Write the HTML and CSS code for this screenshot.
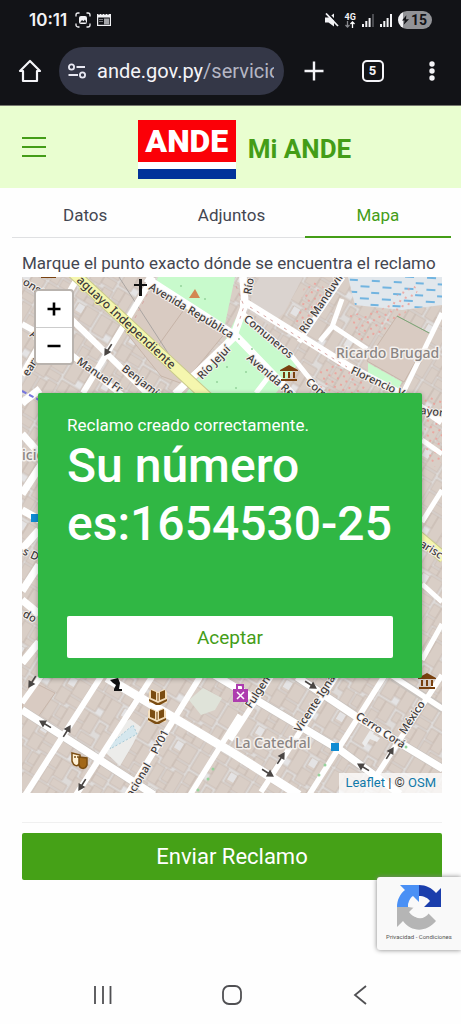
FILE: index.html
```html
<!DOCTYPE html>
<html lang="es">
<head>
  <meta charset="UTF-8" />
  <meta name="viewport" content="width=device-width, initial-scale=1.0" />
  <title>Mi ANDE</title>
  <link rel="stylesheet" href="styles.css">
</head>
<body>
  <!-- Status bar -->
  <div class="status-bar">
    <div class="status-left">
      <span class="clock">10:11</span>
      <svg width="16" height="16" viewBox="0 0 16 16" fill="none" stroke="#f2f2f5" stroke-width="1.3">
        <path d="M1 4.500V3a2 2 0 0 1 2-2h1.500M11.500 1H13a2 2 0 0 1 2 2v1.500M15 11.500V13a2 2 0 0 1-2 2h-1.500M4.500 15H3a2 2 0 0 1-2-2v-1.500"/>
        <rect x="4" y="4" width="8" height="8" rx="2" fill="#f2f2f5" stroke="none"/>
        <path d="M5 10.500l2-2.500 1.500 1.300L10 7.500l1.500 3z" fill="#121317" stroke="none"/>
      </svg>
      <svg width="14" height="14" viewBox="0 0 14 14">
        <path d="M0 1h14v12H0z" fill="#f2f2f5"/>
        <path d="M1.200 4.500h11.600v7.300H1.200z" fill="#121317"/>
        <path d="M2 6h4v1H2zM2 8h4v1H2z" fill="#77787d"/>
        <path d="M7 5.500h5v6H7z" fill="#a5a6aa"/>
        <path d="M2 0v2M5 0v2M8 0v2M11 0v2" stroke="#121317"/>
      </svg>
    </div>
    <div class="status-right">
      <svg width="14" height="14" viewBox="0 0 14 14">
        <path d="M0 4.500h3.500L9 .5v13l-5.500-4H0z" fill="#f2f2f5"/>
        <path d="M2.500 0l12 12" stroke="#121317" stroke-width="2"/>
        <path d="M1 .5l12 12.500" stroke="#f2f2f5" stroke-width="1.800"/>
      </svg>
      <span class="network">4G
        <svg width="10" height="7" viewBox="0 0 10 7" fill="none" stroke-width="1.300">
          <path d="M2.500 0v6M.500 4l2 2 2-2" stroke="#88898e"/>
          <path d="M7.500 7V1M5.500 3l2-2 2 2" stroke="#fff"/>
        </svg>
      </span>
      <svg width="12" height="13" viewBox="0 0 12 13" fill="#f2f2f5"><path d="M0 10h2v3H0zM3.300 7h2v6h-2zM6.600 4h2v9h-2z"/><path d="M10 0h2v13h-2z" fill="#4a4b50"/></svg>
      <svg width="12" height="13" viewBox="0 0 12 13" fill="#f2f2f5"><path d="M0 10h2v3H0zM3.300 7h2v6h-2zM6.600 4h2v9h-2zM10 0h2v13h-2z"/></svg>
      <span class="battery">
        <svg width="7" height="10" viewBox="0 0 8 11"><path d="M5 0L0 6h3L2 11l6-6.500H4.500z" fill="#121317"/></svg>15
      </span>
    </div>
  </div>

  <!-- Browser toolbar -->
  <div class="toolbar">
    <button class="tool" aria-label="Inicio">
      <svg width="24" height="24" viewBox="0 0 24 24" fill="none" stroke="#f4f4f8" stroke-width="2.200" stroke-linejoin="round"><path d="M2 12L12 2l10 10h-3v10H5V12z"/></svg>
    </button>
    <button class="address">
      <svg width="20" height="16" viewBox="0 0 20 16" fill="none" stroke="#e8e8f2" stroke-width="1.800"><circle cx="4.500" cy="4" r="2.600"/><path d="M9.500 4H18M1.500 12H11"/><circle cx="15.500" cy="12" r="2.600"/></svg>
      <span class="url">ande.gov.py<span class="url-path">/servicio</span></span>
    </button>
    <button class="tool" aria-label="Nueva pestaña">
      <svg width="20" height="20" viewBox="0 0 20 20" stroke="#f4f4f8" stroke-width="2.400"><path d="M10 .5v19M.5 10h19"/></svg>
    </button>
    <button class="tool"><span class="tab-count">5</span></button>
    <button class="tool" aria-label="Menú">
      <svg width="6" height="20" viewBox="0 0 6 20" fill="#f4f4f8"><circle cx="3" cy="3" r="2.700"/><circle cx="3" cy="10" r="2.700"/><circle cx="3" cy="17" r="2.700"/></svg>
    </button>
  </div>

  <header class="header">
    <button class="menu-btn" aria-label="Abrir menú">
      <svg width="24" height="20" viewBox="0 0 24 20" stroke="#449d17" stroke-width="2"><path d="M0 1h24M0 10h24M0 19h24"/></svg>
    </button>
    <div class="brand">
      <div class="logo"><span class="logo-name">ANDE</span><span class="logo-bar"></span></div>
      <h1>Mi ANDE</h1>
    </div>
  </header>

  <nav class="tabs">
    <a href="#datos">Datos</a>
    <a href="#adjuntos">Adjuntos</a>
    <a href="#mapa" class="active">Mapa</a>
  </nav>

  <main class="content">
    <p class="hint">Marque el punto exacto dónde se encuentra el reclamo</p>

    <div class="map">
      <svg class="map-tiles" viewBox="22 277 420 516" preserveAspectRatio="xMidYMid slice">
        <defs>
          <!-- City block texture -->
          <pattern id="blocks" width="62" height="54" patternUnits="userSpaceOnUse" patternTransform="rotate(31)">
            <rect width="62" height="54" fill="#dedbd9"/>
            <g fill="#d9cec6" stroke="#c8bab1" stroke-width=".8">
              <path d="M1 1h13v20H1zM14 1h8v14h-8zM22 1h12v24H22zM37 3h9v11h-9zM46 1h14v17H46z"/>
              <path d="M1 24h9v12H1zM10 24h11v19H10zM24 28h7v10h-7zM34 16h12v15H34zM46 20h14v8H46z"/>
              <path d="M1 38h9v15H1zM12 45h16v8H12zM31 33h10v20H31zM43 33h8v12h-8zM51 30h10v23H51zM41 47h10v6H41z"/>
            </g>
            <path d="M38 3h7v8h-7zM15 17h6v5h-6z" fill="#e4e3e4"/>
          </pattern>
          <pattern id="water" width="22" height="12" patternUnits="userSpaceOnUse" patternTransform="rotate(3)">
            <path d="M1 3h9M12 9h8" stroke="#4ba4dd" stroke-width="1.500"/>
          </pattern>
          <pattern id="dots" width="9" height="9" patternUnits="userSpaceOnUse" patternTransform="rotate(20)">
            <circle cx="2" cy="2" r="1.100" fill="#ee9d97"/><circle cx="6" cy="6" r="1.100" fill="#ee9d97"/>
          </pattern>
          <g id="museum" fill="#79410f"><path d="M0 5l9-5 9 5v1H0zM1 14h16v2H1zM3 7h2v6H3zM8 7h2v6H8zM13 7h2v6h-2z"/></g>
          <g id="book"><path d="M0 3l3-3 6 3 6-3 3 3v11H0z" fill="#f4dfbd"/><path d="M2 1l5 2v8L2 9zM16 1l-5 2v8l5-2zM0 10l9 4 9-4v2l-7 4H7l-7-4zM8.500 4h1v8h-1z" fill="#7b4d12"/></g>
          <path id="arrow" d="M-7-.8H0v-3.200L7 0 0 4v-3.200h-7z" fill="#4a4644"/>
        </defs>

        <rect x="22" y="277" width="420" height="516" fill="url(#blocks)"/>

        <!-- Land use -->
        <path d="M124 330l22-46 80 48-43 52-22-8z" fill="#d9cbc2" stroke="#c8b6aa"/>
        <path d="M183 311l-28 39" stroke="#c6b3a7"/>
        <path d="M158 277h77l-10 47-6 5-66-40z" fill="#c8facc"/>
        <path d="M236 318l7-2 42 36 13 12-22 29H186l34-43z" fill="#c8facc"/>
        <path d="M252 290l8-13h43l-19 36-15 12-19-13z" fill="#dad3cf"/>
        <path d="M348 277h94v28l-40 5-47-5-4-16z" fill="#e1e7ec"/>
        <path d="M348 277h94v28l-40 5-47-5-4-16z" fill="url(#water)"/>
        <path d="M305 284l14-3 9 13-21 29-13 2zM348 315l34-6 28-26 9 6-17 30-40 26zM318 370l27-10 22 25-5 8h-41zM424 397h18v65l-8 5-9-20z" fill="url(#dots)"/>
        <path d="M397 316l34 18-27 48-37-21z" fill="#d9cbc2" stroke="#c8b6aa"/>
        <path d="M397 316l34 18" stroke="#7aa778"/>
        <path d="M368 363l34 19-6 11-28-18z" fill="#c8facc"/>
        <path d="M22 707l9-26 24 12-19 27z" fill="#d9cbc2" stroke="#c8b6aa"/>
        <path d="M105 752l13-25 12-8 11 8-8 17-13 22z" fill="#ececea"/>
        <path d="M112 743l21-18 4 9-27 15z" fill="#d5e7ee" stroke="#a8cad6" stroke-dasharray="2 2"/>
        <path d="M189 700l14-12 19 10-7 12-14 5z" fill="#dfe3d9"/>
        <path d="M362 743l12-19 4 3-5 7 7 4-3 4-7-3-5 8z" fill="#ececec"/>
        <path d="M119 277l58 90" fill="none" stroke="#aaa5a2"/>

        <!-- Streets -->
        <g fill="none" stroke="#c9c3be" stroke-width="9">
          <path d="M22 710l78 50 54 35M110 680l123 73 66 42M203 668l137 82 60 44M297 677l60 40 86 52M393 677l50 32"/>
        </g>
        <g fill="none" stroke="#fff" stroke-width="7.500">
          <path d="M22 710l78 50 54 35M203 668l137 82 60 44M297 677l60 40 86 52"/>
          <path d="M102 675L24 797M200 677l-73 118M152 677L76 795" stroke-width="6"/>
          <path d="M107 678l126 75 66 42" stroke-width="9"/>
          <path d="M391 675l52 34M240 715l-50 80M272 675l-42 65M337 675l-76 117M385 675l-76 120M442 675l-73 112M42 675l-20 28" stroke-width="5.500"/>
          <path d="M153 277L83 393M68 316l82 80M22 324l36 20 65 52M78 277L22 375" stroke-width="6"/>
          <path d="M146 278l90 58 58 60M243 277l2 27-12 34-58 56M240 304l8 0 100 62 53 28 41 28"/>
          <path d="M243 314l46 39 34 42M343 277l-44 65M342 299l-10 28-12 14M331 325l36 24M442 313l-40 82M256 393l17-22" stroke-width="5"/>
          <path d="M22 403l18-14M22 434l17 19M41 465l-19 29M22 510l18 10M22 549l17-19M22 600l17 14M39 565l-17 26M22 663l17-21"/>
          <path d="M442 490l-20 32M422 584l20 18M422 660l20-36M422 440l20 14" stroke-width="5"/>
        </g>
        <path d="M70 270l138 128M418 536l26 22" fill="none" stroke="#c9ca8d" stroke-width="12"/>
        <path d="M70 270l138 128M418 536l26 22" fill="none" stroke="#f5f6ae" stroke-width="10"/>
        <path d="M250 307l97 60M236 286l8 20-7 22M135 318l14-27" fill="none" stroke="#d7a7a4" stroke-dasharray="3 5"/>
        <path d="M22 391l17 9" stroke="#7777dd" stroke-width="2" stroke-dasharray="5 3"/>
        <g fill="#95d39b"><circle cx="181" cy="286" r="1"/><circle cx="205" cy="299" r="1"/><circle cx="239" cy="339" r="1"/><circle cx="252" cy="349" r="1"/><circle cx="260" cy="363" r="1"/><circle cx="246" cy="372" r="1"/><circle cx="227" cy="367" r="1"/><circle cx="217" cy="382" r="1"/><circle cx="236" cy="388" r="1"/><circle cx="213" cy="769" r="1.500"/><circle cx="208" cy="779" r="1.500"/><circle cx="198" cy="790" r="1.500"/><circle cx="325" cy="765" r="1.500"/><circle cx="319" cy="775" r="1.500"/><circle cx="406" cy="747" r="1.500"/></g>

        <!-- One way arrows -->
        <use href="#arrow" transform="translate(32 682) rotate(122)"/>
        <use href="#arrow" transform="translate(45 724) rotate(211)"/>
        <use href="#arrow" transform="translate(67 731) rotate(-58)"/>
        <use href="#arrow" transform="translate(82 785) rotate(122)"/>
        <use href="#arrow" transform="translate(311 685) rotate(32)"/>
        <use href="#arrow" transform="translate(281 758) rotate(-58)"/>
        <use href="#arrow" transform="translate(268 773) rotate(32)"/>
        <use href="#arrow" transform="translate(363 767) rotate(211)"/>
        <use href="#arrow" transform="translate(390 753) rotate(-58)"/>
        <use href="#arrow" transform="translate(108 350) rotate(122)"/>

        <!-- Street names -->
        <g class="street">
          <text transform="translate(76 281) rotate(43)" class="avenue">aguayo Independiente</text>
          <text transform="translate(148 289) rotate(31)">Avenida República</text>
          <text transform="translate(202 380) rotate(-46)">Río Jejuí</text>
          <text transform="translate(121 370) rotate(38)">Benjamín</text>
          <text transform="translate(76 363) rotate(35)">Manuel Fr</text>
          <text transform="translate(22 284) rotate(32)">onst</text>
          <text transform="translate(29 336) rotate(28)">A</text>
          <text transform="translate(28 377) rotate(-57)">eary</text>
          <text transform="translate(251 295) rotate(-80)">Río</text>
          <text transform="translate(243 320) rotate(40)">Comuneros</text>
          <text transform="translate(246 359) rotate(41)">Avenida República</text>
          <text transform="translate(305 383) rotate(41)">Comuneros</text>
          <text transform="translate(305 334) rotate(-56)">Río Manduvirá</text>
          <text transform="translate(350 373) rotate(25)">Florencio V</text>
          <text transform="translate(420 414) rotate(6)">ayor</text>
          <text transform="translate(419 546) rotate(32)">arisc</text>
          <text transform="translate(22 554) rotate(25)">s D</text>
          <text transform="translate(22 616) rotate(30)">do</text>
          <text transform="translate(132 798) rotate(-59)">acional</text>
          <text transform="translate(157 755) rotate(-62)">PY01</text>
          <text transform="translate(251 709) rotate(-57)">Fulgencio</text>
          <text transform="translate(300 733) rotate(-57)">Vicente Ignacio</text>
          <text transform="translate(355 718) rotate(33)">Cerro Corá</text>
          <text transform="translate(405 735) rotate(-57)">México</text>
        </g>
        <g class="district">
          <text x="336" y="358">Ricardo Brugad</text>
          <text x="235" y="748">La Catedral</text>
          <text x="22" y="460">icio</text>
        </g>

        <!-- Points of interest -->
        <path d="M139 279h3v5h5v2h-5v10h-3v-10h-5v-2h5z" fill="#111"/>
        <path d="M189 298l6-9 5 9z" fill="#d38752"/>
        <path d="M41 277h15v1H41z" fill="#79410f"/>
        <use href="#museum" x="280" y="365"/>
        <use href="#museum" x="418" y="673"/>
        <use href="#book" x="149" y="689"/>
        <use href="#book" x="148" y="708"/>
        <path d="M110 680l8-2 2 5-1 6h3v2h-8v-2l2-4-3-2z" fill="#111"/>
        <path d="M72 753l8 2v8c-3 5-7 2-8-2z" fill="#fff1d5" stroke="#7b4d12" stroke-width="1.500"/>
        <path d="M79 757l8 1v7c-2 5-7 4-8 0zM74 757h2m1 0h2" fill="#a26819" stroke="#7b4d12" stroke-width="1.500"/>
        <path d="M233 689h15v13h-15z" fill="#ae3daf"/>
        <path d="M237 689v-4h6v4" fill="none" stroke="#ae3daf" stroke-width="2"/>
        <path d="M237 692l7 7M244 692l-7 7" stroke="#fff" stroke-width="1.500"/>
        <path d="M31 514h8v8h-8zM331 743h8v8h-8z" fill="#108bd2"/>
      </svg>

      <div class="zoom-control">
        <button aria-label="Acercar"><svg width="14" height="14" viewBox="0 0 14 14" stroke="#000" stroke-width="2.600"><path d="M7 .5v13M.5 7h13"/></svg></button>
        <button aria-label="Alejar"><svg width="14" height="14" viewBox="0 0 14 14" stroke="#000" stroke-width="2.600"><path d="M.5 7h13"/></svg></button>
      </div>
      <div class="attribution"><a href="#leaflet">Leaflet</a> | © <a href="#osm">OSM</a></div>

      <!-- Confirmation message -->
      <div class="dialog" role="dialog" aria-labelledby="numero">
        <p>Reclamo creado correctamente.</p>
        <h2 id="numero">Su número es:1654530-25</h2>
        <button class="accept-btn">Aceptar</button>
      </div>
    </div>

    <hr>
    <button class="send-btn">Enviar Reclamo</button>
  </main>

  <div class="recaptcha">
    <svg width="46" height="46" viewBox="0 0 46 46">
      <path d="M23 1v17l-6-6c-3 2-5 6-5 11H1C1 16 4 10 9 6L4 1z" fill="#4a90f5"/>
      <path d="M23 1c7 0 13 3 17 8l5-5v19H28l6-6c-2-3-6-5-11-5z" fill="#1b3eac"/>
      <path d="M1 23h17l-5 5c4 6 12 8 19 1l8 8C30 49 15 48 7 37l-6 6z" fill="#b5b5b5"/>
      <path d="M12 21l2-5 4-2 5 5v-6l5 1 4 3-5 6h-4l10 6c-4 6-12 8-18 0l4-5-7-1z" fill="#f9f9f9"/>
    </svg>
    <div class="recaptcha-links"><a href="#privacidad">Privacidad</a> - <a href="#condiciones">Condiciones</a></div>
  </div>

  <!-- System navigation -->
  <div class="nav-bar">
    <button aria-label="Recientes"><svg width="20" height="20" viewBox="0 0 20 20" stroke="#505053" stroke-width="1.800"><path d="M2 1v18M10 1v18M17.500 1v18"/></svg></button>
    <button aria-label="Inicio"><svg width="20" height="20" viewBox="0 0 20 20" fill="none" stroke="#505053" stroke-width="1.800"><rect x="1" y="1" width="18" height="18" rx="6"/></svg></button>
    <button aria-label="Atrás"><svg width="20" height="20" viewBox="0 0 20 20" fill="none" stroke="#505053" stroke-width="1.800"><path d="M16 1L5 10l11 9"/></svg></button>
  </div>
</body>
</html>
```
FILE: styles.css
```css
/* Global Styles */
* {
  margin: 0;
  padding: 0;
  box-sizing: border-box;
}

body {
  position: relative;
  display: flex;
  flex-direction: column;
  min-height: 100vh;
  background: #fefefe;
  color: #444651;
  font-family: Roboto, sans-serif;
  font-size: 17px;
  line-height: 24px;
}

a {
  color: inherit;
  text-decoration: none;
}

button {
  border: none;
  background: none;
  color: inherit;
  font-family: inherit;
  cursor: pointer;
}

svg {
  display: block;
}

/* Status bar */
.status-bar {
  display: flex;
  justify-content: space-between;
  align-items: center;
  height: 40px;
  padding: 0 29px;
  background: #121317;
  color: #f2f2f5;
}

.status-left,
.status-right {
  display: flex;
  align-items: center;
  gap: 6px;
}

.clock {
  margin-right: 2px;
  font-family: Inter, sans-serif;
  font-size: 17px;
  font-weight: 600;
}

.network {
  display: flex;
  flex-direction: column;
  align-items: center;
  font-size: 9px;
  font-weight: 700;
  line-height: 8px;
}

.battery {
  display: flex;
  align-items: center;
  gap: 2px;
  height: 18px;
  padding: 0 5px 0 4px;
  border-radius: 9px;
  background: linear-gradient(90deg, #f2f2f5 15%, #929397 15%);
  color: #121317;
  font-size: 14px;
  font-weight: 700;
}

/* Browser toolbar */
.toolbar {
  display: flex;
  align-items: center;
  height: 66px;
  padding: 0 0 3px;
  border-bottom: 1px solid #77786f;
  background: #121317;
  color: #f4f4f8;
}

.tool {
  display: flex;
  flex: none;
  justify-content: center;
  align-items: center;
  width: 59px;
  height: 48px;
}

.address {
  display: flex;
  flex: 1;
  align-items: center;
  gap: 10px;
  min-width: 0;
  height: 48px;
  padding: 0 10px 0 8px;
  border-radius: 24px;
  background: #343747;
}

.address svg {
  flex: none;
}

.url {
  overflow: hidden;
  font-size: 20px;
  line-height: 28px;
  white-space: nowrap;
}

.url-path {
  color: #b5b6c4;
}

.tab-count {
  width: 22px;
  height: 22px;
  border: 2px solid #f4f4f8;
  border-radius: 5px;
  font-size: 13px;
  font-weight: 700;
  line-height: 18px;
}

/* Header */
.header {
  display: flex;
  align-items: center;
  height: 82px;
  padding: 0 18px 0 22px;
  background: #e9fed0;
}

.brand {
  display: flex;
  flex: 1;
  justify-content: center;
  align-items: center;
  gap: 12px;
  padding-top: 4px;
}

.logo {
  width: 98px;
}

.logo-name {
  display: block;
  height: 42px;
  background: #fb0007;
  color: #fff;
  font-size: 32px;
  font-weight: 900;
  line-height: 42px;
  text-align: center;
}

.logo-bar {
  display: block;
  height: 17px;
  border-top: 7px solid #fff;
  background: #01339a;
}

.header h1 {
  color: #449d17;
  font-size: 26px;
  font-weight: 700;
  line-height: 32px;
}

/* Tabs */
.tabs {
  display: flex;
  margin: 0 10px 0 12px;
  border-bottom: 1px solid #dfe0e2;
}

.tabs a {
  flex: 1;
  height: 50px;
  margin-bottom: -1px;
  border-bottom: 2px solid transparent;
  line-height: 54px;
  text-align: center;
}

.tabs .active {
  border-color: #449d17;
  color: #449d17;
}

/* Content */
.content {
  padding: 13px 19px 0 22px;
}

.hint {
  margin-bottom: 2px;
  white-space: nowrap;
}

.map {
  position: relative;
  height: 516px;
  overflow: hidden;
}

.map-tiles {
  width: 100%;
  height: 100%;
}

.street,
.district {
  fill: #3f3b3a;
  stroke: #f4f0ed;
  stroke-width: 2px;
  stroke-linejoin: round;
  paint-order: stroke;
  font-family: "Noto Sans", sans-serif;
  font-size: 11px;
  font-weight: 500;
}

.street .avenue {
  stroke: #f5f6ae;
  font-size: 12px;
}

.district {
  fill: #8a8583;
  stroke-width: 3px;
  font-size: 14px;
}

.zoom-control {
  position: absolute;
  top: 12px;
  left: 12px;
  overflow: hidden;
  border: 2px solid #b9b3ae;
  border-radius: 4px;
  background: #fff;
}

.zoom-control button {
  display: flex;
  justify-content: center;
  align-items: center;
  width: 36px;
  height: 36px;
}

.zoom-control button + button {
  border-top: 1px solid #ccc;
}

.attribution {
  position: absolute;
  right: 0;
  bottom: 0;
  padding: 0 6px;
  background: rgba(255, 255, 255, 0.75);
  color: #333;
  font-size: 13px;
  line-height: 20px;
}

.attribution a {
  color: #1079a9;
}

/* Confirmation dialog */
.dialog {
  position: absolute;
  top: 116px;
  right: 20px;
  left: 16px;
  padding: 20px 29px;
  border-radius: 2px;
  background: #30b744;
  box-shadow: 0 1px 5px rgba(0, 0, 0, 0.3);
  color: #fff;
}

.dialog h2 {
  margin-bottom: 63px;
  font-size: 48px;
  font-weight: 500;
  line-height: 58px;
}

.accept-btn,
.send-btn {
  display: block;
  width: 100%;
  border-radius: 2px;
}

.accept-btn {
  height: 42px;
  background: #fff;
  color: #449d17;
  font-size: 19px;
}

hr {
  margin: 29px 0 10px;
  border: none;
  border-top: 1px solid #f0f0f0;
}

.send-btn {
  height: 47px;
  background: #45a117;
  color: #fff;
  font-size: 22px;
}

/* reCAPTCHA badge */
.recaptcha {
  position: absolute;
  top: 877px;
  right: 0;
  display: flex;
  flex-direction: column;
  align-items: center;
  width: 84px;
  height: 73px;
  padding-top: 7px;
  border-radius: 3px 0 0 3px;
  background: #f9f9f9;
  box-shadow: 0 0 5px #808080;
}

.recaptcha-links {
  color: #555;
  font-size: 6px;
  line-height: 14px;
}

/* System navigation */
.nav-bar {
  display: flex;
  justify-content: space-between;
  margin-top: auto;
  padding: 0 73px 0 75px;
}

.nav-bar button {
  display: flex;
  justify-content: center;
  align-items: center;
  width: 56px;
  height: 58px;
}
```
